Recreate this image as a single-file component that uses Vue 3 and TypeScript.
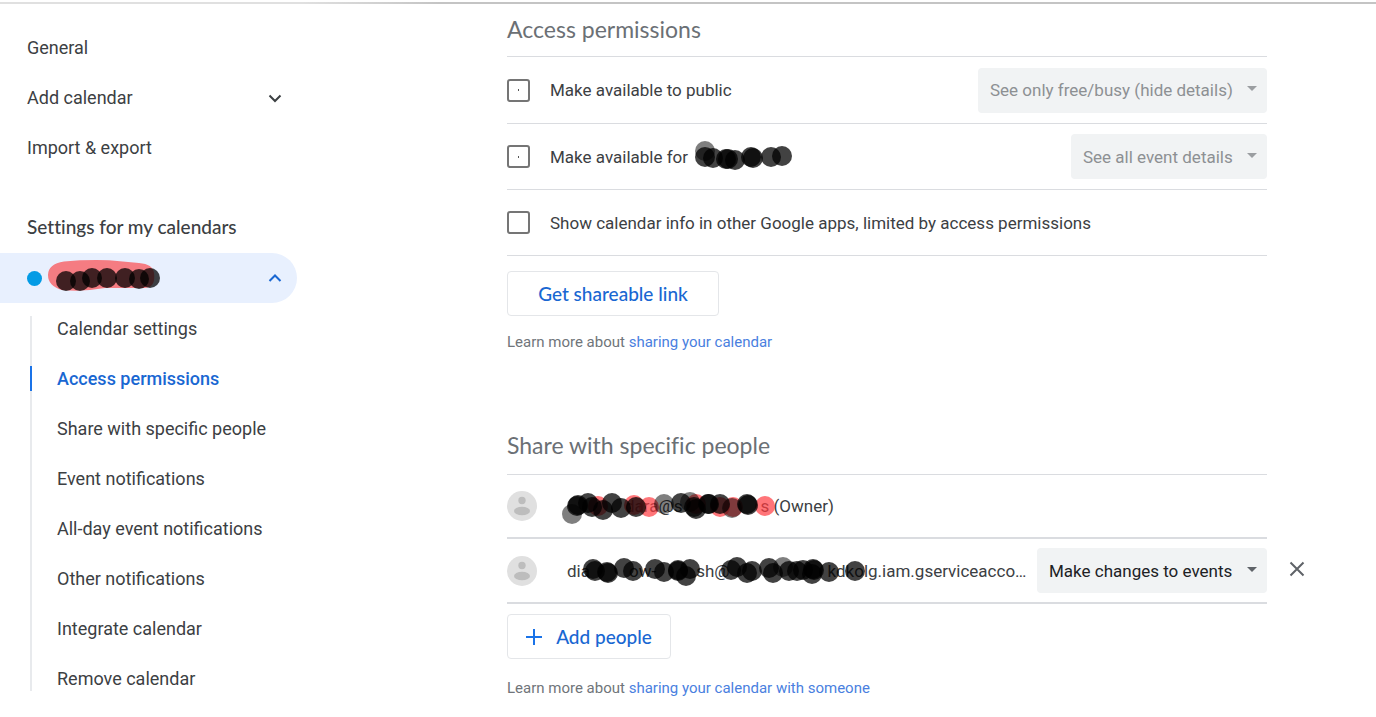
<script setup lang="ts">
import { ref } from 'vue'

type Mark = [x: number, y: number, tone?: 'soft' | 'red']
type Part = string | number

interface Person {
  id: string
  parts: Part[]
  marks: Mark[]
  role?: string
}

const topLinks = ['General', 'Add calendar', 'Import & export']
const subLinks = [
  'Calendar settings',
  'Access permissions',
  'Share with specific people',
  'Event notifications',
  'All-day event notifications',
  'Other notifications',
  'Integrate calendar',
  'Remove calendar',
]
const active = ref('Access permissions')

const calendarMarks: Mark[] = [[19, 21], [33, 21], [45, 18], [60, 18], [78, 18], [92, 19], [103, 18]]
const domainMarks: Mark[] = [
  [12, 14, 'soft'], [12, 20], [20, 21], [33, 22], [35, 22], [42, 23], [58, 20], [60, 21], [78, 20], [89, 19],
]

const people: Person[] = [
  {
    id: 'owner',
    parts: [58, 'dara@s', 78, 's (Owner)'],
    marks: [
      [41, 20, 'red'], [77, 19, 'red'], [92, 21, 'red'], [139, 18, 'red'], [163, 21, 'red'], [176, 21, 'red'], [208, 20, 'red'],
      [15, 28, 'soft'], [107, 18, 'soft'], [133, 16, 'soft'], [175, 22, 'soft'],
      [21, 19], [20, 20], [31, 17], [35, 21], [46, 24], [55, 17], [64, 22], [79, 21],
      [124, 17], [137, 21], [139, 23], [152, 18], [151, 18], [163, 18], [190, 18], [191, 19],
    ],
  },
  {
    id: 'service',
    parts: ['dia', 39, 'ow-', 40, 'sh@', 98, 'kdkolg.iam.gserviceacco…'],
    marks: [
      [36, 18], [38, 20], [50, 21], [51, 22], [67, 17], [76, 20], [98, 18], [107, 21], [121, 19], [121, 20], [129, 25], [133, 18],
      [180, 16], [174, 19], [190, 22], [195, 20], [212, 17], [216, 22], [226, 16, 'soft'], [232, 20], [240, 20], [246, 19],
      [255, 23], [256, 18], [257, 19], [272, 21], [298, 20],
    ],
    role: 'Make changes to events',
  },
]
</script>

<template>
  <div class="page">
    <nav class="side" aria-label="Settings">
      <ul class="list">
        <li v-for="link in topLinks" :key="link">
          <a class="item" href="#">
            <span>{{ link }}</span>
            <svg v-if="link === 'Add calendar'" class="chevron" viewBox="0 0 14 14" aria-hidden="true">
              <path d="M1.5 4.5 7 10l5.500-5.500" />
            </svg>
          </a>
        </li>
      </ul>
      <h2 class="group">Settings for my calendars</h2>
      <button class="item calendar" type="button" aria-expanded="true" aria-label="Calendar">
        <span class="dot"></span>
        <svg class="marks calendar-marks" viewBox="0 0 116 36" aria-hidden="true">
          <path class="swipe" d="M17 1.500Q38-.5 62 .2L92 3Q106 4 107 13Q109 27 98 28H58Q35 32 15 30Q1 26 1 15Q1 4 17 1.500Z" />
          <circle v-for="(m, i) in calendarMarks" :key="i" :cx="m[0]" :cy="m[1]" r="10" />
        </svg>
        <svg class="chevron" viewBox="0 0 14 14" aria-hidden="true">
          <path d="M1.500 10 7 4.500 12.500 10" />
        </svg>
      </button>
      <ul class="list sub">
        <li v-for="link in subLinks" :key="link">
          <a class="item" :class="{ active: link === active }" href="#" @click.prevent="active = link">{{ link }}</a>
        </li>
      </ul>
    </nav>

    <main class="main">
      <section class="section">
        <h1 class="title">Access permissions</h1>
        <div class="row first">
          <input id="public" class="box dotted" type="checkbox" />
          <label class="label" for="public">Make available to public</label>
          <span class="picker">
            <select disabled aria-label="Public access level">
              <option>See only free/busy (hide details)</option>
            </select>
            <svg class="caret" viewBox="0 0 10 5" aria-hidden="true"><path d="M0 0h10L5 5z" /></svg>
          </span>
        </div>
        <div class="row">
          <input id="domain" class="box dotted" type="checkbox" />
          <label class="label" for="domain">
            Make available for
            <svg class="marks domain-marks" viewBox="0 0 102 36" aria-hidden="true">
              <circle v-for="(m, i) in domainMarks" :key="i" :class="m[2]" :cx="m[0]" :cy="m[1]" r="10" />
            </svg>
          </label>
          <span class="picker">
            <select disabled aria-label="Organization access level">
              <option>See all event details</option>
            </select>
            <svg class="caret" viewBox="0 0 10 5" aria-hidden="true"><path d="M0 0h10L5 5z" /></svg>
          </span>
        </div>
        <div class="row">
          <input id="apps" class="box" type="checkbox" />
          <label class="label" for="apps">Show calendar info in other Google apps, limited by access permissions</label>
        </div>
        <button class="action" type="button">Get shareable link</button>
        <p class="hint">Learn more about <a href="#">sharing your calendar</a></p>
      </section>

      <section class="section share">
        <h1 class="title">Share with specific people</h1>
        <ul class="list">
          <li v-for="person in people" :key="person.id" class="person">
            <div class="row thick">
              <svg class="avatar" viewBox="0 0 30 30" aria-hidden="true">
                <circle cx="15" cy="15" r="15" fill="#e0e0e0" />
                <circle cx="15" cy="9.500" r="3.700" fill="#bdbdbd" />
                <ellipse cx="15" cy="20" rx="8" ry="4.300" fill="#bdbdbd" />
              </svg>
              <div class="who">
                <div class="address">
                  <template v-for="(part, i) in person.parts" :key="i">
                    <span v-if="typeof part === 'number'" class="gap" :style="{ width: part + 'px' }"></span>
                    <template v-else>{{ part }}</template>
                  </template>
                </div>
                <svg class="marks who-marks" viewBox="0 0 320 40" aria-hidden="true">
                  <circle v-for="(m, i) in person.marks" :key="i" :class="m[2]" :cx="m[0]" :cy="m[1]" r="10" />
                </svg>
              </div>
              <span v-if="person.role" class="picker">
                <select aria-label="Permission">
                  <option>{{ person.role }}</option>
                </select>
                <svg class="caret" viewBox="0 0 10 5" aria-hidden="true"><path d="M0 0h10L5 5z" /></svg>
              </span>
            </div>
            <button v-if="person.role" class="remove" type="button" aria-label="Remove">
              <svg viewBox="0 0 16 16" aria-hidden="true"><path d="M1.500 1.500l13 13M14.500 1.500l-13 13" /></svg>
            </button>
          </li>
        </ul>
        <button class="action add" type="button">
          <svg viewBox="0 0 16 16" aria-hidden="true"><path d="M8 0v16M0 8h16" /></svg>
          Add people
        </button>
        <p class="hint">Learn more about <a href="#">sharing your calendar with someone</a></p>
      </section>
    </main>
  </div>
</template>

<style>
body {
  margin: 0;
  background: #fff;
}
</style>

<style scoped>
* {
  box-sizing: border-box;
}

.page {
  display: flex;
  gap: 210px;
  margin-top: 2px;
  border-top: 2px solid;
  border-image: linear-gradient(90deg, #e0e0e0 22%, #c4c4c4 32%) 1;
  font: 18px/24px Roboto, 'Liberation Sans', sans-serif;
  color: #3c4043;
}

button,
select {
  font: inherit;
  color: inherit;
}

.side {
  flex: 0 0 297px;
  padding-top: 18px;
}

.list {
  margin: 0;
  padding: 0;
  list-style: none;
}

.item {
  display: flex;
  align-items: center;
  justify-content: space-between;
  width: 100%;
  height: 50px;
  padding: 2px 15px 0 27px;
  border: 0;
  color: inherit;
  text-decoration: none;
}

.chevron {
  width: 14px;
  height: 14px;
  fill: none;
  stroke: currentColor;
  stroke-width: 2;
}

.group {
  margin: 30px 0 1px;
  padding-left: 27px;
  font: 500 19px/50px Lato, sans-serif;
  font-variant-ligatures: none;
}

.calendar {
  position: relative;
  padding-top: 0;
  border-radius: 0 25px 25px 0;
  background: #e8f0fe;
  color: #1967d2;
}

.dot {
  width: 15px;
  height: 15px;
  border-radius: 50%;
  background: #039be5;
}

.marks {
  position: absolute;
  fill: #000;
  overflow: visible;
  pointer-events: none;
}

.marks circle {
  fill-opacity: 0.74;
}

.marks .soft {
  fill-opacity: 0.5;
}

.marks .red {
  fill: #ff3b40;
  fill-opacity: 0.7;
}

.swipe {
  fill: #f57c82;
}

.calendar-marks {
  left: 47px;
  top: 7px;
  width: 116px;
  height: 36px;
}

.sub {
  position: relative;
}

.sub::before {
  content: '';
  position: absolute;
  left: 30px;
  top: 13px;
  bottom: 12px;
  width: 2px;
  background: #e8eaed;
}

.sub .item {
  position: relative;
  padding-left: 57px;
}

.sub .active {
  color: #1967d2;
  font-weight: 500;
}

.active::before {
  content: '';
  position: absolute;
  left: 30px;
  top: 13px;
  width: 2px;
  height: 25px;
  background: #1a73e8;
}

.main {
  flex: 0 1 820px;
  min-width: 0;
  font-size: 17px;
}

.section {
  padding-right: 60px;
}

.title {
  margin: 0;
  padding: 9px 0 11px;
  border-bottom: 1px solid #dadce0;
  font: 400 23px/32px Lato, sans-serif;
  font-variant-ligatures: none;
  color: #6b7075;
}

.row {
  display: flex;
  align-items: center;
  height: 66px;
  border-bottom: 1px solid #dadce0;
}

.first {
  height: 67px;
}

.box {
  flex: none;
  display: grid;
  place-items: center;
  appearance: none;
  width: 23px;
  height: 23px;
  margin: 0 20px 0 0;
  border: 2px solid #757575;
  border-radius: 3px;
}

.box.dotted::before {
  content: '';
  width: 1px;
  height: 2px;
  background: #555;
}

.label {
  position: relative;
}

.domain-marks {
  left: 143px;
  top: -8px;
  width: 102px;
  height: 36px;
}

.picker {
  display: grid;
  align-items: center;
  margin-left: auto;
}

.picker select {
  grid-area: 1 / 1;
  appearance: none;
  height: 45px;
  padding: 0 34px 0 12px;
  border: 0;
  border-radius: 4px;
  background: #f1f3f4;
  color: #202124;
  opacity: 1;
}

.picker select:disabled {
  color: #8d9093;
}

.caret {
  grid-area: 1 / 1;
  justify-self: end;
  width: 10px;
  height: 5px;
  margin-right: 10px;
  margin-bottom: 3px;
  fill: #5f6368;
  pointer-events: none;
}

select:disabled + .caret {
  fill: #9b9ea1;
}

.action {
  display: flex;
  align-items: center;
  justify-content: center;
  gap: 14px;
  min-width: 212px;
  height: 45px;
  margin-top: 15px;
  padding: 0 18px;
  border: 1px solid #e4e6e9;
  border-radius: 4px;
  background: #fff;
  color: #1967d2;
  font: 500 19px/24px Lato, sans-serif;
}

.action svg {
  width: 16px;
  height: 16px;
  fill: none;
  stroke: #1a73e8;
  stroke-width: 2;
}

.add {
  min-width: 164px;
  margin-top: 10px;
}

.hint {
  margin: 16px 0 0;
  font-size: 15px;
  line-height: 20px;
  color: #70757a;
}

.add + .hint {
  margin-top: 19px;
}

.hint a {
  color: #4a7fe0;
  text-decoration: none;
}

.share {
  margin-top: 68px;
}

.share .title {
  padding-bottom: 13px;
}

.person {
  position: relative;
}

.thick {
  height: 65px;
  border-bottom-width: 2px;
}

.person:first-child .thick {
  height: 64px;
}

.avatar {
  flex: none;
  width: 30px;
  height: 30px;
  margin-right: 30px;
}

.who {
  position: relative;
  flex: 1;
  min-width: 0;
}

.address {
  overflow: hidden;
  text-overflow: ellipsis;
  white-space: nowrap;
}

.gap {
  display: inline-block;
}

.who-marks {
  left: -10px;
  top: -8px;
  width: 320px;
  height: 40px;
}

.remove {
  position: absolute;
  left: 100%;
  top: 15px;
  display: grid;
  place-items: center;
  width: 60px;
  height: 30px;
  padding: 0;
  border: 0;
  background: none;
}

.remove svg {
  width: 16px;
  height: 16px;
  fill: none;
  stroke: #5f6368;
  stroke-width: 2;
}
</style>
